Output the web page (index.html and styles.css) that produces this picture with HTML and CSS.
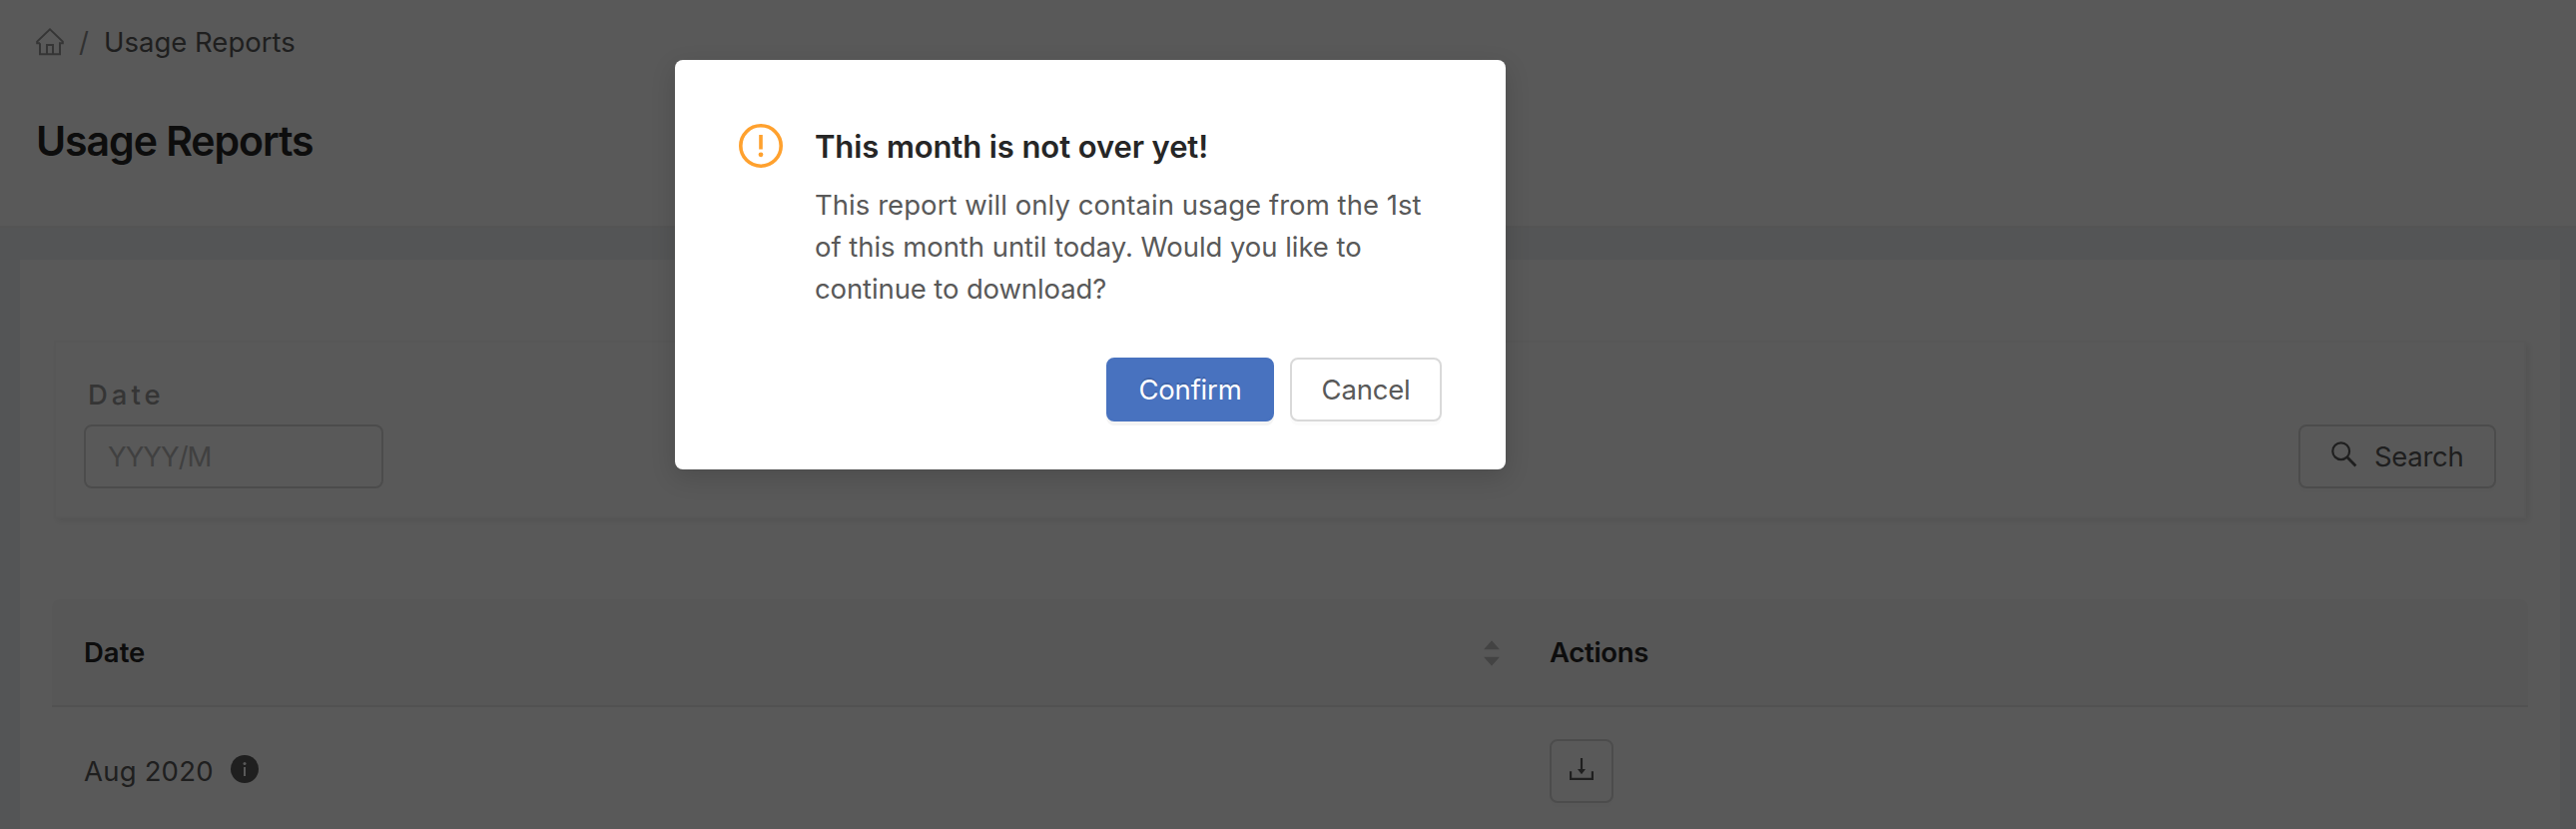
FILE: index.html
```
<!DOCTYPE html>
<html lang="en">
<head>
<meta charset="utf-8">
<title>Usage Reports</title>
<link rel="stylesheet" href="styles.css">
</head>
<body>
<div class="page">
  <header class="page-header">
    <nav class="breadcrumb">
      <svg class="home-icon" viewBox="0 0 28 28" fill="none" stroke="currentColor" stroke-width="2"><path d="M4 15.2V26.2H24V15.2H26.8V13.6L14 1.4L1.2 13.6V15.2H4M11 26V17H17V26"/></svg>
      <span class="slash">/</span>
      <span class="crumb">Usage Reports</span>
    </nav>
    <h1 class="title">Usage Reports</h1>
  </header>
  <main class="panel">
    <section class="filter">
      <div class="field">
        <label class="label" for="month">Date</label>
        <input class="input" id="month" placeholder="YYYY/M">
      </div>
      <button class="btn search">
        <svg class="search-icon" viewBox="0 0 28 28" fill="none" stroke="currentColor" stroke-width="2.2"><circle cx="10.7" cy="10.7" r="8.4"/><path d="M16.6 16.6L25.4 25.4" stroke-width="2.8"/></svg>
        <span class="search-text">Search</span>
      </button>
    </section>
    <section class="table">
      <div class="row head">
        <div class="cell sortable"><span class="th-date">Date</span>
          <svg class="sorter" viewBox="0 0 16 26" fill="currentColor"><path d="M8 0.3L16 9.3H0zM8 25.7L16 16.7H0z"/></svg>
        </div>
        <div class="cell"><span class="th-actions">Actions</span></div>
      </div>
      <div class="row">
        <div class="cell"><span class="month">Aug 2020</span>
          <svg class="info-icon" viewBox="0 0 28 28"><circle cx="14" cy="14" r="14" fill="#595959"/><path d="M14 12V21" stroke="#fff" stroke-width="2"/><circle cx="14" cy="8.4" r="1.5" fill="#fff"/></svg>
        </div>
        <div class="cell">
          <button class="btn download" aria-label="Download">
            <svg class="download-icon" viewBox="0 0 28 28" fill="none" stroke="currentColor" stroke-width="2.2"><path d="M3.1 16.2V23.8H24.9V16.2"/><path d="M14 3V14"/><path d="M10 14H18L14 19.2z" fill="currentColor" stroke="none"/></svg>
          </button>
        </div>
      </div>
    </section>
  </main>
</div>
<div class="mask">
  <div class="modal" role="dialog">
    <div class="modal-body">
      <svg class="warn-icon" viewBox="0 0 44 44"><circle cx="22" cy="22" r="20.2" fill="none" stroke="#ffa12e" stroke-width="3.6"/><path d="M22 11V25.5" stroke="#ffa12e" stroke-width="3.6"/><circle cx="22" cy="30.8" r="2.4" fill="#ffa12e"/></svg>
      <div class="modal-copy">
        <h2 class="modal-title">This month is not over yet!</h2>
        <p class="modal-text"><span class="l1">This report will only contain usage from the 1st</span><br><span class="l2">of this month until today. Would you like to</span><br><span class="l3">continue to download?</span></p>
      </div>
    </div>
    <div class="modal-actions">
      <button class="btn primary"><span class="confirm-text">Confirm</span></button>
      <button class="btn cancel"><span class="cancel-text">Cancel</span></button>
    </div>
  </div>
</div>
</body>
</html>
```
FILE: styles.css
```
* { box-sizing: border-box; }
body {
  margin: 0;
  height: 830px;
  overflow: hidden;
  background: #f0f2f5;
  color: #595959;
  font: 27.5px/42px Inter, "Liberation Sans", sans-serif;
}
svg { display: block; flex: none; }
.page { height: 830px; overflow: hidden; }
.page-header {
  height: 228px;
  padding: 21px 36px 0;
  background: #fff;
  border-bottom: 2px solid #f0f0f0;
}
.breadcrumb { display: flex; align-items: center; height: 42px; }
.home-icon { width: 28px; height: 28px; color: #999; }
.slash { width: 10px; margin: 0 15px; color: #8c8c8c; }
.title {
  margin: 46px 0 0;
  color: #262626;
  font-size: 41px;
  line-height: 64px;
  font-weight: 600;
  letter-spacing: -1.05px;
}
.panel {
  margin: 32px 16px 0 20px;
  height: 600px;
  padding: 81px 32px 0;
  background: #fff;
}
.filter {
  display: flex;
  justify-content: space-between;
  align-items: flex-end;
  height: 178px;
  margin: 0 2px;
  padding: 0 28px 28px;
  border: 2px solid #fafafa;
  box-shadow: 3px 3px 6px rgba(0,0,0,.08);
}
.field { display: flex; flex-direction: column; gap: 9px; }
.label { padding-left: 4px; color: #999; letter-spacing: 4px; font-weight: 500; }
.input {
  width: 300px;
  height: 64px;
  padding: 0 22px;
  border: 2px solid #d9d9d9;
  border-radius: 8px;
  background: #fff;
  font: inherit;
}
.input::placeholder { color: #b8b8b8; opacity: 1; letter-spacing: -1px; }
.btn {
  display: flex;
  align-items: center;
  justify-content: center;
  height: 64px;
  padding: 0;
  border: 2px solid #d9d9d9;
  border-radius: 8px;
  background: #fff;
  color: #595959;
  font: inherit;
  white-space: nowrap;
  box-shadow: 0 4px 0 rgba(0,0,0,.015);
}
.search { width: 198px; justify-content: flex-start; padding-left: 30px; gap: 16px; }
.search-icon { width: 28px; height: 28px; margin-bottom: 4px; }
.search-text { letter-spacing: -.3px; }
.table { margin-top: 81px; }
.row {
  display: grid;
  grid-template-columns: 1468px 1fr;
  height: 128px;
}
.head {
  height: 108px;
  background: #fafafa;
  border-bottom: 2px solid #e8e8e8;
  border-radius: 8px 8px 0 0;
  color: #262626;
  font-weight: 600;
}
.cell { display: flex; align-items: center; padding: 0 32px; }
.sortable { justify-content: space-between; padding-right: 18px; }
.sorter { width: 16px; height: 26px; color: #bfbfbf; margin-top: 2px; }
.th-actions { letter-spacing: -.3px; }
.month { letter-spacing: .2px; }
.info-icon { width: 28px; height: 28px; margin-left: 17px; margin-bottom: 4px; }
.download { width: 64px; }
.download-icon { width: 28px; height: 28px; margin-bottom: 4px; }
.mask {
  position: absolute;
  inset: 0;
  padding: 60px 0 0 676px;
  background: rgba(0,0,0,.65);
}
.modal {
  width: 832px;
  height: 410px;
  padding: 64px 64px 48px;
  background: #fff;
  border-radius: 8px;
  box-shadow: 0 8px 24px rgba(0,0,0,.15);
  display: flex;
  flex-direction: column;
  justify-content: space-between;
}
.modal-body { display: flex; gap: 32px; }
.warn-icon { width: 44px; height: 44px; }
.modal-title { margin: 0; color: #262626; font-size: 31px; line-height: 45px; font-weight: 600; letter-spacing: -.1px; }
.modal-text { margin: 15px 0 0; white-space: nowrap; }
.l1 { letter-spacing: .05px; }
.l2 { letter-spacing: -.05px; }
.l3 { letter-spacing: -.12px; }
.modal-actions { display: flex; justify-content: flex-end; gap: 16px; }
.primary {
  width: 168px;
  border-color: #4872bf;
  background: #4872bf;
  color: #fff;
  text-shadow: 0 -2px 0 rgba(0,0,0,.12);
  box-shadow: 0 4px 0 rgba(0,0,0,.045);
}
.confirm-text, .cancel-text { letter-spacing: -.2px; }
.cancel { width: 152px; }
```
